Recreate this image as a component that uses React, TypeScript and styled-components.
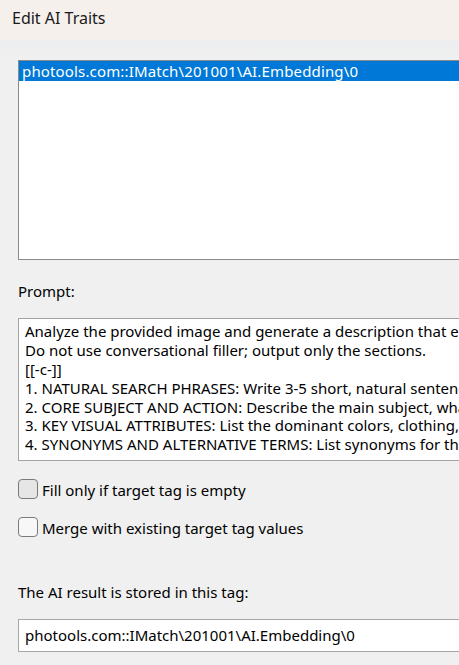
import React from "react";
import styled, { createGlobalStyle } from "styled-components";

const Global = createGlobalStyle`
  html, body { margin: 0; padding: 0; background: #f0f0f0; }
  body { font-family: "Noto Sans", "DejaVu Sans", sans-serif; color: #000; }
  #root { width: 459px; height: 665px; overflow: hidden; }
`;

const Window = styled.div`
  width: 459px;
  height: 665px;
  overflow: hidden;
  display: flex;
  flex-direction: column;
  background: #f0f0f0;
`;

const TitleBar = styled.div`
  height: 40px;
  flex: none;
  background: #f6f0ec;
  display: flex;
  align-items: center;
  padding: 0 0 4px 12px;
  box-sizing: border-box;
  font-size: 16px;
  color: #1a1a1a;
`;

const Body = styled.div`
  flex: 1;
  display: flex;
  flex-direction: column;
  padding: 20px 0 0 18px;
  background: linear-gradient(#ecedee 0px, #f0f0f0 20px);
  font-size: 15px;
`;

const ListBox = styled.div`
  width: 480px;
  height: 200px;
  box-sizing: border-box;
  border: 1px solid #8a8a8a;
  background: #fff;
  padding: 0;
`;

const ListItem = styled.div<{ $selected?: boolean }>`
  height: 20px;
  line-height: 20px;
  padding-left: 3px;
  white-space: nowrap;
  letter-spacing: 0.15px;
  background: ${(p) => (p.$selected ? "#0078d7" : "transparent")};
  color: ${(p) => (p.$selected ? "#fff" : "#000")};
`;

const Label = styled.div<{ $top: number }>`
  margin-top: ${(p) => p.$top}px;
  height: 20px;
  line-height: 20px;
  white-space: nowrap;
`;

const TextArea = styled.div`
  margin-top: 17px;
  width: 480px;
  height: 143px;
  box-sizing: border-box;
  border: 1px solid #a3a3a3;
  background: #fff;
  padding: 3px 0 0 6px;
  overflow: hidden;
`;

const Line = styled.div`
  height: 18.9px;
  line-height: 18.9px;
  white-space: nowrap;
`;

const CheckRow = styled.label<{ $top: number }>`
  margin-top: ${(p) => p.$top}px;
  display: flex;
  align-items: center;
  gap: 4px;
  height: 20px;
`;

const Box = styled.span<{ $fill: string }>`
  width: 20px;
  height: 20px;
  box-sizing: border-box;
  border: 1px solid #7b7b7b;
  border-radius: 4px;
  background: ${(p) => p.$fill};
  flex: none;
`;

const CheckText = styled.span`
  white-space: nowrap;
  position: relative;
  top: 1px;
`;

const Input = styled.div`
  margin-top: 17px;
  width: 480px;
  height: 33px;
  box-sizing: border-box;
  border: 1px solid #a6a6a6;
  background: #fff;
  padding-left: 6px;
  line-height: 30px;
  white-space: nowrap;
`;

const tag = "photools.com::IMatch\\201001\\AI.Embedding\\0";

const promptLines = [
  "Analyze the provided image and generate a description that emphasizes searchable content.",
  "Do not use conversational filler; output only the sections.",
  "[[-c-]]",
  "1. NATURAL SEARCH PHRASES: Write 3-5 short, natural sentences a user might type.",
  "2. CORE SUBJECT AND ACTION: Describe the main subject, what it is doing.",
  "3. KEY VISUAL ATTRIBUTES: List the dominant colors, clothing, materials.",
  "4. SYNONYMS AND ALTERNATIVE TERMS: List synonyms for the main objects.",
];

export default function App() {
  return (
    <>
      <Global />
      <Window>
        <TitleBar>Edit AI Traits</TitleBar>
        <Body>
          <ListBox>
            <ListItem $selected>{tag}</ListItem>
          </ListBox>
          <Label $top={21}>Prompt:</Label>
          <TextArea>
            {promptLines.map((l, i) => (
              <Line key={i}>{l}</Line>
            ))}
          </TextArea>
          <CheckRow $top={18}>
            <Box $fill="#e6e6e6" />
            <CheckText>Fill only if target tag is empty</CheckText>
          </CheckRow>
          <CheckRow $top={18}>
            <Box $fill="#f7f7f7" />
            <CheckText>Merge with existing target tag values</CheckText>
          </CheckRow>
          <Label $top={45}>The AI result is stored in this tag:</Label>
          <Input>{tag}</Input>
        </Body>
      </Window>
    </>
  );
}
